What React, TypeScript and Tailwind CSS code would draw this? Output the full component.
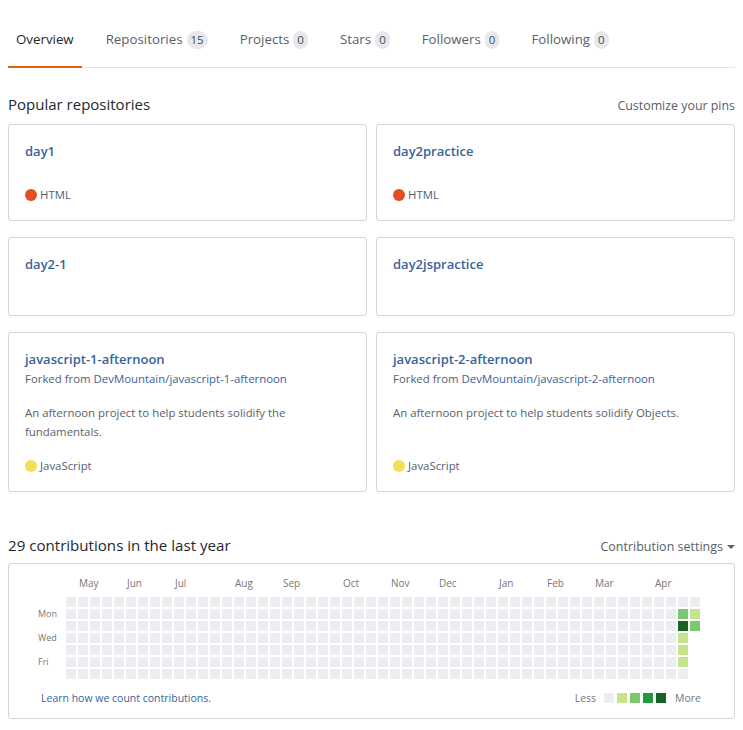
import React from 'react';

const FONT = { fontFamily: '"Open Sans", "Noto Sans", sans-serif' };

const tabs = [
  { label: 'Overview', active: true },
  { label: 'Repositories', count: 15 },
  { label: 'Projects', count: 0 },
  { label: 'Stars', count: 0 },
  { label: 'Followers', count: 0 },
  { label: 'Following', count: 0 },
];

interface Repo {
  name: string;
  fork?: string;
  desc?: string;
  lang?: { name: string; color: string };
}

const repos: Repo[] = [
  { name: 'day1', lang: { name: 'HTML', color: 'bg-[#e34c26]' } },
  { name: 'day2practice', lang: { name: 'HTML', color: 'bg-[#e34c26]' } },
  { name: 'day2-1' },
  { name: 'day2jspractice' },
  {
    name: 'javascript-1-afternoon',
    fork: 'DevMountain/javascript-1-afternoon',
    desc: 'An afternoon project to help students solidify the fundamentals.',
    lang: { name: 'JavaScript', color: 'bg-[#f1e05a]' },
  },
  {
    name: 'javascript-2-afternoon',
    fork: 'DevMountain/javascript-2-afternoon',
    desc: 'An afternoon project to help students solidify Objects.',
    lang: { name: 'JavaScript', color: 'bg-[#f1e05a]' },
  },
];

const months = [
  { label: 'May', col: 1 },
  { label: 'Jun', col: 5 },
  { label: 'Jul', col: 9 },
  { label: 'Aug', col: 14 },
  { label: 'Sep', col: 18 },
  { label: 'Oct', col: 23 },
  { label: 'Nov', col: 27 },
  { label: 'Dec', col: 31 },
  { label: 'Jan', col: 36 },
  { label: 'Feb', col: 40 },
  { label: 'Mar', col: 44 },
  { label: 'Apr', col: 49 },
];

const LEVELS = ['#ebedf0', '#c6e48b', '#7bc96f', '#239a3b', '#196127'];

// level per (week, day); last week only has 3 days so far
function cellLevel(week: number, day: number): number {
  if (week === 51) return [0, 2, 4, 1, 1, 1, 0][day];
  if (week === 52) return [0, 1, 2][day];
  return 0;
}

function RepoCard({ repo }: { repo: Repo }) {
  return (
    <div className="flex flex-col rounded-[3px] border border-[#d1d5da] bg-white p-4">
      <a className="text-[13px] font-semibold leading-[21px] text-[#36639c]">{repo.name}</a>
      {repo.fork && (
        <p className="text-[11.4px] leading-[18px] text-[#586069]">
          Forked from <a className="text-[#36639c]">{repo.fork}</a>
        </p>
      )}
      {repo.desc ? (
        <p className="mb-4 mt-[15px] text-[11.4px] leading-[19px] text-[#586069]">{repo.desc}</p>
      ) : (
        <div className="h-6" />
      )}
      {repo.lang && (
        <p className="mt-auto flex items-center text-[11.4px] leading-[18px] text-[#586069]">
          <span className={`mr-[3px] inline-block h-3 w-3 rounded-full ${repo.lang.color}`} />
          {repo.lang.name}
        </p>
      )}
    </div>
  );
}

function Contributions() {
  const weeks = Array.from({ length: 53 }, (_, i) => i);
  return (
    <div className="rounded-[3px] border border-[#d1d5da] bg-white">
      <div className="relative ml-[29px] h-[33px]">
        {months.map((m) => (
          <span
            key={m.label}
            className="absolute top-[12px] text-[10px] leading-[14px] text-[#767676]"
            style={{ left: 29 + m.col * 12 }}
          >
            {m.label}
          </span>
        ))}
      </div>
      <div className="flex">
        <div className="flex w-[57px] flex-col gap-[2px] pl-[29px] text-[9px] leading-[10px] text-[#767676]">
          {['', 'Mon', '', 'Wed', '', 'Fri', ''].map((d, i) => (
            <span key={i} className="h-[10px]">
              {d}
            </span>
          ))}
        </div>
        <div className="flex gap-[2px]">
          {weeks.map((w) => (
            <div key={w} className="flex flex-col gap-[2px]">
              {Array.from({ length: w === 52 ? 3 : 7 }, (_, d) => (
                <div
                  key={d}
                  className="h-[10px] w-[10px]"
                  style={{ backgroundColor: LEVELS[cellLevel(w, d)] }}
                />
              ))}
            </div>
          ))}
        </div>
      </div>
      <div className="flex items-center justify-between pb-[12px] pl-[32px] pr-[33px] pt-[11px] text-[10.5px] leading-[16px]">
        <a className="text-[#36639c]">Learn how we count contributions.</a>
        <div className="flex items-center text-[#767676]">
          <span className="mr-[8px]">Less</span>
          <div className="flex gap-[3px]">
            {LEVELS.map((c) => (
              <span key={c} className="h-[10px] w-[10px]" style={{ backgroundColor: c }} />
            ))}
          </div>
          <span className="ml-[9px]">More</span>
        </div>
      </div>
    </div>
  );
}

export default function App() {
  return (
    <div className="min-h-screen bg-white px-2 text-[#24292e]" style={FONT}>
      {/* Tabs */}
      <nav className="flex border-b border-[#e1e4e8] pt-[14px]">
        {tabs.map((t) => (
          <a
            key={t.label}
            className={`-mb-px mr-4 flex h-[54px] items-center border-b-2 px-2 text-[13.3px] ${
              t.active ? 'border-[#e36209] text-[#24292e]' : 'border-transparent text-[#586069]'
            }`}
          >
            {t.label}
            {t.count !== undefined && (
              <span className="ml-1 rounded-full bg-[#e6e8eb] px-1 text-[11.5px] leading-[18px] text-[#444d56]">
                {t.count}
              </span>
            )}
          </a>
        ))}
      </nav>

      {/* Pinned */}
      <div className="mt-6 flex items-baseline justify-between">
        <h2 className="text-[15px] leading-6 text-[#24292e]">Popular repositories</h2>
        <a className="text-[12.4px] text-[#586069]">Customize your pins</a>
      </div>
      <div className="mt-2 grid grid-cols-2 gap-x-[9px] gap-y-[16px]">
        {repos.map((r) => (
          <RepoCard key={r.name} repo={r} />
        ))}
      </div>

      {/* Contributions */}
      <div className="mt-[41px] flex items-baseline justify-between">
        <h2 className="text-[15.1px] leading-6 text-[#24292e]">29 contributions in the last year</h2>
        <a className="flex items-center text-[12.5px] text-[#586069]">
          Contribution settings
          <svg width="8" height="4" viewBox="0 0 8 4" className="ml-1">
            <path d="M0 0h8L4 4z" fill="#586069" />
          </svg>
        </a>
      </div>
      <div className="mt-[6px]">
        <Contributions />
      </div>
    </div>
  );
}
